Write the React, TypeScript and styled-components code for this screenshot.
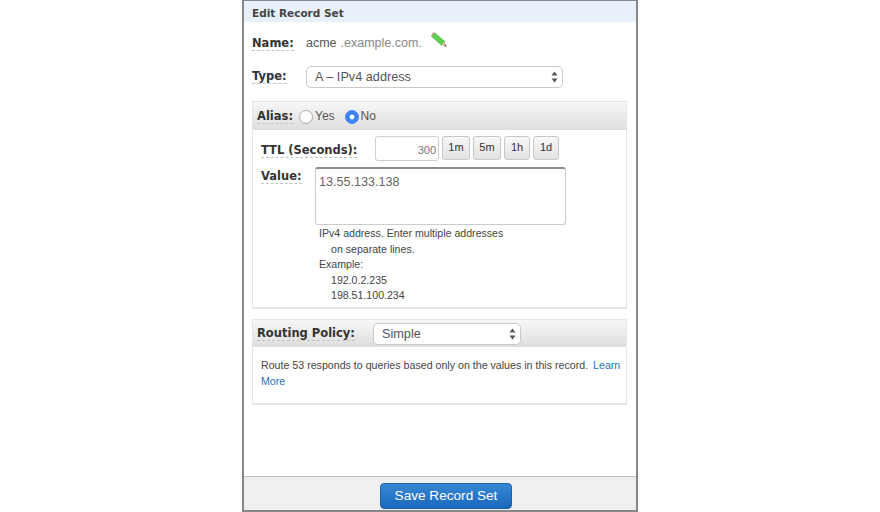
import * as React from "react";
import styled, { createGlobalStyle } from "styled-components";

const Global = createGlobalStyle`
  html, body {
    margin: 0;
    padding: 0;
    background: #fff;
  }
  body {
    font-family: "Liberation Sans", Arial, sans-serif;
    color: #444;
  }
`;

const Page = styled.div`
  display: flex;
  justify-content: center;
  width: 880px;
  height: 512px;
  overflow: hidden;
`;

const Panel = styled.div`
  display: flex;
  flex-direction: column;
  width: 396px;
  height: 512px;
  box-sizing: border-box;
  border: 2px solid #85878a;
  border-top-width: 1px;
  background: #fff;
`;

const Title = styled.div`
  height: 21px;
  line-height: 25px;
  padding-left: 8px;
  background: #e7f0fb;
  font-family: "DejaVu Sans", Verdana, sans-serif;
  font-size: 10.5px;
  font-weight: bold;
  color: #444;
`;

const Content = styled.div`
  flex: 1;
  display: flex;
  flex-direction: column;
  padding: 0 9px 0 8px;
`;

const Row = styled.div<{ $height: number }>`
  display: flex;
  align-items: center;
  height: ${(p) => p.$height}px;
`;

const Label = styled.span<{ $width?: number; $lift?: number }>`
  display: inline-block;
  flex: none;
  width: ${(p) => (p.$width ? `${p.$width}px` : "auto")};
  padding-bottom: ${(p) => p.$lift ?? 0}px;
  font-family: "DejaVu Sans", Verdana, sans-serif;
  font-size: 11.5px;
  font-weight: bold;
  line-height: 14px;
  color: #333;
`;

const Dashed = styled.span`
  border-bottom: 1px dashed #c4c4c4;
`;

const NameValue = styled.span`
  font-size: 12.5px;
  color: #555;
`;

const Domain = styled.span`
  margin-left: 4px;
  color: #888;
`;

const Pencil = styled.svg`
  margin: -6px 0 0 9px;
`;

const Select = styled.div<{ $width: number }>`
  display: flex;
  align-items: center;
  justify-content: space-between;
  box-sizing: border-box;
  width: ${(p) => p.$width}px;
  height: 22px;
  padding: 0 4px 0 8px;
  border: 1px solid #c9c9c9;
  border-radius: 5px;
  background: #fff;
  font-size: 12.7px;
  color: #555;
`;

const Section = styled.div<{ $height: number }>`
  display: flex;
  flex-direction: column;
  box-sizing: border-box;
  height: ${(p) => p.$height}px;
  border: 2px solid #e6e6e6;
  border-width: 1px 1px 2px;
`;

const SectionHead = styled.div<{ $height: number }>`
  display: flex;
  align-items: center;
  flex: none;
  height: ${(p) => p.$height}px;
  padding-left: 4px;
  background: linear-gradient(#f7f7f7, #dedede);
`;

const AliasLabel = styled(Label)`
  margin-right: 6px;
`;

const Radio = styled.span<{ $on?: boolean }>`
  box-sizing: border-box;
  width: 14px;
  height: 14px;
  border-radius: 50%;
  margin-top: 1px;
  border: 1px solid ${(p) => (p.$on ? "#3d84f5" : "#aaa")};
  background: ${(p) =>
    p.$on
      ? "radial-gradient(circle, #fff 0, #fff 2px, #3d84f5 2.8px)"
      : "#fff"};
`;

const RadioLabel = styled.span`
  display: inline-block;
  font-size: 12px;
  color: #555;
  margin: 0 10px 0 2px;
`;

const SectionBody = styled.div`
  flex: 1;
  padding: 0 4px 0 8px;
`;

const TtlRow = styled.div`
  display: flex;
  align-items: flex-start;
  padding-top: 6px;
`;

const TtlLabel = styled(Label)`
  width: 114px;
  margin-top: 7px;
`;

const TtlInput = styled.div`
  box-sizing: border-box;
  width: 64px;
  height: 25px;
  margin-right: 3px;
  padding-right: 2px;
  border: 1px solid #d0d0d0;
  border-radius: 3px;
  text-align: right;
  font-size: 11px;
  line-height: 27px;
  color: #777;
`;

const TtlButton = styled.div<{ $width: number }>`
  box-sizing: border-box;
  width: ${(p) => p.$width}px;
  height: 24px;
  margin-right: 3px;
  border: 1px solid #c8c8c8;
  border-radius: 3px;
  background: linear-gradient(#f8f8f8, #e2e2e2);
  text-align: center;
  font-size: 11px;
  line-height: 21px;
  color: #333;
`;

const ValueRow = styled.div`
  display: flex;
  align-items: flex-start;
  margin-top: 6px;
`;

const ValueLabel = styled(Label)`
  width: 54px;
  margin-top: 2px;
`;

const ValueBox = styled.div`
  box-sizing: border-box;
  width: 251px;
  height: 58px;
  padding: 6px 3px;
  border: 1px solid #ccc;
  border-top: 2px solid #8c8c8c;
  border-radius: 3px;
  font-size: 12.6px;
  color: #666;
`;

const Hint = styled.div`
  margin: 1px 0 0 58px;
  font-size: 10.6px;
  line-height: 15.5px;
  color: #444;
`;

const Indent = styled.div<{ $px: number }>`
  padding-left: ${(p) => p.$px}px;
`;

const Spacer = styled.div<{ $height: number }>`
  flex: none;
  height: ${(p) => p.$height}px;
`;

const PolicyText = styled.div`
  padding-top: 11px;
  font-size: 10.65px;
  line-height: 15.5px;
  color: #444;
`;

const Link = styled.a`
  color: #1f6fc0;
  margin-left: 2px;
`;

const Footer = styled.div`
  display: flex;
  justify-content: center;
  align-items: flex-end;
  flex: none;
  height: 33px;
  box-sizing: content-box;
  padding-left: 12px;
  border-top: 1px solid #bdbdbd;
  background: #f0f0f0;
`;

const SaveButton = styled.div`
  box-sizing: border-box;
  width: 132px;
  height: 26px;
  margin-bottom: 1px;
  border: 1px solid #1c62ab;
  border-radius: 4px;
  background: linear-gradient(#3688d6, #1a68bc);
  text-align: center;
  font-size: 13.6px;
  line-height: 24px;
  color: #fff;
`;

const Arrows = () => (
  <svg width="7" height="12" viewBox="0 0 7 12">
    <path d="M3.5 0.5 L6.5 4.5 H0.5 Z M3.5 11.5 L0.5 7.5 H6.5 Z" fill="#555" />
  </svg>
);

export default function App() {
  return (
    <Page>
      <Global />
      <Panel>
        <Title>Edit Record Set</Title>
        <Content>
          <Row $height={41}>
            <Label $width={54}>
              <Dashed>Name:</Dashed>
            </Label>
            <NameValue>
              acme<Domain>.example.com.</Domain>
            </NameValue>
            <Pencil width="16" height="16" viewBox="0 0 16 16">
              <path d="M3.6 0.8 L14 9.6 L10.6 13.4 L0.6 4.4 Z" fill="#5fcf4f" stroke="#4aa63f" strokeWidth="0.5" />
              <path d="M3.6 0.8 L0.6 4.4 L0.2 3 L2.4 0.5 Z" fill="#e58a8a" />
              <path d="M14 9.6 L15.4 14.6 L10.6 13.4 Z" fill="#e8bfa0" />
              <path d="M14.8 12.4 L15.4 14.6 L13 14 Z" fill="#444" />
            </Pencil>
          </Row>
          <Row $height={27}>
            <Label $width={54} $lift={2}>
              <Dashed>Type:</Dashed>
            </Label>
            <Select $width={257}>
              A – IPv4 address
              <Arrows />
            </Select>
          </Row>
          <Spacer $height={11} />
          <Section $height={208}>
            <SectionHead $height={28}>
              <AliasLabel $lift={1}>
                <Dashed>Alias:</Dashed>
              </AliasLabel>
              <Radio />
              <RadioLabel>Yes</RadioLabel>
              <Radio $on />
              <RadioLabel>No</RadioLabel>
            </SectionHead>
            <SectionBody>
              <TtlRow>
                <TtlLabel>
                  <Dashed>TTL (Seconds):</Dashed>
                </TtlLabel>
                <TtlInput>300</TtlInput>
                <TtlButton $width={28}>1m</TtlButton>
                <TtlButton $width={28}>5m</TtlButton>
                <TtlButton $width={26}>1h</TtlButton>
                <TtlButton $width={26}>1d</TtlButton>
              </TtlRow>
              <ValueRow>
                <ValueLabel>
                  <Dashed>Value:</Dashed>
                </ValueLabel>
                <ValueBox>13.55.133.138</ValueBox>
              </ValueRow>
              <Hint>
                IPv4 address. Enter multiple addresses
                <Indent $px={12}>on separate lines.</Indent>
                Example:
                <Indent $px={12}>192.0.2.235</Indent>
                <Indent $px={12}>198.51.100.234</Indent>
              </Hint>
            </SectionBody>
          </Section>
          <Spacer $height={10} />
          <Section $height={86}>
            <SectionHead $height={27}>
              <Label $width={116} $lift={1}>
                <Dashed>Routing Policy:</Dashed>
              </Label>
              <Select $width={148}>
                Simple
                <Arrows />
              </Select>
            </SectionHead>
            <SectionBody>
              <PolicyText>
                Route 53 responds to queries based only on the values in this record.{" "}
                <Link>Learn More</Link>
              </PolicyText>
            </SectionBody>
          </Section>
        </Content>
        <Footer>
          <SaveButton>Save Record Set</SaveButton>
        </Footer>
      </Panel>
    </Page>
  );
}
